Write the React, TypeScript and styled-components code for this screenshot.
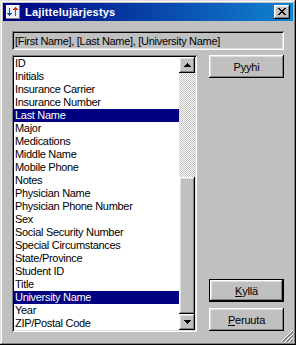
import React from "react";
import styled, { createGlobalStyle, css } from "styled-components";

const Global = createGlobalStyle`
  html, body { margin: 0; padding: 0; background: #c0c0c0; }
  #root { width: 296px; height: 345px; }
`;

const raised = css`
  box-shadow: inset -1px -1px 0 #000, inset 1px 1px 0 #fff,
    inset -2px -2px 0 #808080, inset 2px 2px 0 #dfdfdf;
`;

const sunken = css`
  box-shadow: inset 1px 1px 0 #808080, inset -1px -1px 0 #fff,
    inset 2px 2px 0 #000, inset -2px -2px 0 #dfdfdf;
`;

const Window = styled.div`
  position: relative;
  box-sizing: border-box;
  width: 296px;
  height: 345px;
  padding: 3px;
  background: #c0c0c0;
  box-shadow: inset -1px -1px 0 #000, inset 1px 1px 0 #dfdfdf,
    inset -2px -2px 0 #808080, inset 2px 2px 0 #fff;
  display: flex;
  flex-direction: column;
  font-family: "Liberation Sans", Arial, sans-serif;
  font-size: 11px;
  color: #000;
`;

const TitleBar = styled.div`
  height: 18px;
  flex: none;
  display: flex;
  align-items: center;
  padding: 0 3px 0 2px;
  background: linear-gradient(to right, #000080, #1084d0);
  color: #fff;
`;

const TitleText = styled.span`
  flex: 1;
  margin-left: 4px;
  font-weight: bold;
  font-size: 11px;
  letter-spacing: 0.2px;
  line-height: 18px;
  white-space: nowrap;
`;

const CloseButton = styled.div`
  width: 16px;
  height: 14px;
  box-sizing: border-box;
  background: #c0c0c0;
  ${raised};
  display: flex;
  align-items: center;
  justify-content: center;
  padding: 0 0 1px 0;
`;

const Body = styled.div`
  flex: 1;
  display: flex;
  flex-direction: column;
  gap: 5px;
  padding: 10px 9px 10px 9px;
`;

const Field = styled.div`
  height: 19px;
  flex: none;
  box-sizing: border-box;
  ${sunken};
  padding: 1px 3px 0 3px;
  line-height: 18px;
  letter-spacing: -0.3px;
  white-space: nowrap;
  overflow: hidden;
`;

const Row = styled.div`
  flex: 1;
  display: flex;
  gap: 12px;
  min-height: 0;
`;

const ListBox = styled.div`
  width: 185px;
  box-sizing: border-box;
  padding: 2px;
  background: #fff;
  ${sunken};
  display: flex;
`;

const Items = styled.div`
  flex: 1;
  display: flex;
  flex-direction: column;
  overflow: hidden;
`;

const Item = styled.div<{ $selected?: boolean }>`
  height: 13px;
  line-height: 13px;
  padding-left: 1px;
  white-space: nowrap;
  letter-spacing: -0.3px;
  background: ${(p) => (p.$selected ? "#000080" : "transparent")};
  color: ${(p) => (p.$selected ? "#fff" : "#000")};
`;

const ScrollBar = styled.div`
  width: 16px;
  flex: none;
  display: flex;
  flex-direction: column;
`;

const ArrowButton = styled.div`
  width: 16px;
  height: 16px;
  flex: none;
  box-sizing: border-box;
  background: #c0c0c0;
  ${raised};
  display: flex;
  align-items: center;
  justify-content: center;
`;

const Track = styled.div`
  flex: 1;
  display: flex;
  flex-direction: column;
  justify-content: flex-end;
  background-color: #c0c0c0;
  background-image: conic-gradient(#fff 25%, #c0c0c0 0 50%, #fff 0 75%, #c0c0c0 0);
  background-size: 2px 2px;
`;

const Thumb = styled.div`
  width: 16px;
  box-sizing: border-box;
  background: #c0c0c0;
  ${raised};
`;

const ButtonColumn = styled.div`
  width: 75px;
  display: flex;
  flex-direction: column;
  gap: 6px;
  padding-bottom: 1px;
`;

const Button = styled.div<{ $default?: boolean; $push?: boolean }>`
  height: 23px;
  flex: none;
  box-sizing: border-box;
  background: #c0c0c0;
  display: flex;
  align-items: center;
  justify-content: center;
  letter-spacing: -0.2px;
  margin-top: ${(p) => (p.$push ? "auto" : "0")};
  border: ${(p) => (p.$default ? "1px solid #000" : "none")};
  ${raised};
`;

const Grip = styled.svg`
  position: absolute;
  right: 3px;
  bottom: 3px;
`;

const Pixels: React.FC<{ cells: string[]; color: string }> = ({ cells, color }) => (
  <>
    {cells.flatMap((row, y) =>
      row.split("").map((c, x) =>
        c === "x" ? <rect key={`${x}-${y}`} x={x} y={y} width={1} height={1} fill={color} /> : null
      )
    )}
  </>
);

const CloseGlyph = () => (
  <svg width="8" height="7" viewBox="0 0 8 7" shapeRendering="crispEdges">
    <Pixels
      color="#000"
      cells={["xx....xx", ".xx..xx.", "..xxxx..", "...xx...", "..xxxx..", ".xx..xx.", "xx....xx"]}
    />
  </svg>
);

const Arrow: React.FC<{ down?: boolean }> = ({ down }) => {
  const rows = ["...x...", "..xxx..", ".xxxxx.", "xxxxxxx"];
  return (
    <svg width="7" height="4" viewBox="0 0 7 4" shapeRendering="crispEdges">
      <Pixels color="#000" cells={down ? [...rows].reverse() : rows} />
    </svg>
  );
};

const AppIcon = () => (
  <svg width="16" height="16" viewBox="0 0 16 16" shapeRendering="crispEdges">
    <rect x="1" y="1" width="14" height="14" fill="#fff" />
    <rect x="1" y="1" width="14" height="1" fill="#fff" />
    <rect x="1" y="14" width="14" height="1" fill="#808080" />
    <rect x="14" y="1" width="1" height="14" fill="#808080" />
    <rect x="2" y="2" width="12" height="12" fill="#e8eef8" />
    <Pixels
      color="#2040c0"
      cells={[
        "",
        "",
        "",
        "",
        "....x",
        "....x",
        "....x",
        "....x",
        "....x",
        "..xxxxx",
        "...xxx",
        "....x",
      ]}
    />
    <Pixels
      color="#e02000"
      cells={[
        "",
        "",
        "",
        "..........x",
        ".........xxx",
        "........xxxxx",
        "..........x",
        "..........x",
        "..........x",
        "..........x",
        "..........x",
        "..........x",
      ]}
    />
  </svg>
);

const GripIcon = () => {
  const rects: React.ReactNode[] = [];
  const size = 12;
  const groups = [
    { c: 11, color: "#fff" },
    { c: 12, color: "#808080" },
    { c: 13, color: "#808080" },
    { c: 15, color: "#fff" },
    { c: 16, color: "#808080" },
    { c: 17, color: "#808080" },
    { c: 19, color: "#fff" },
    { c: 20, color: "#808080" },
    { c: 21, color: "#808080" },
  ];
  groups.forEach(({ c, color }) => {
    for (let x = 0; x < size; x++) {
      const y = c - x;
      if (y >= 0 && y < size) rects.push(<rect key={`${c}-${x}`} x={x} y={y} width={1} height={1} fill={color} />);
    }
  });
  return <>{rects}</>;
};

const ITEMS = [
  "ID",
  "Initials",
  "Insurance Carrier",
  "Insurance Number",
  "Last Name",
  "Major",
  "Medications",
  "Middle Name",
  "Mobile Phone",
  "Notes",
  "Physician Name",
  "Physician Phone Number",
  "Sex",
  "Social Security Number",
  "Special Circumstances",
  "State/Province",
  "Student ID",
  "Title",
  "University Name",
  "Year",
  "ZIP/Postal Code",
];

const SELECTED = new Set(["Last Name", "University Name"]);
const TOTAL_ITEMS = 37;
const TRACK = 241;

export default function App() {
  const thumb = Math.round((TRACK * ITEMS.length) / TOTAL_ITEMS);
  return (
    <>
      <Global />
      <Window>
        <TitleBar>
          <AppIcon />
          <TitleText>Lajittelujärjestys</TitleText>
          <CloseButton>
            <CloseGlyph />
          </CloseButton>
        </TitleBar>
        <Body>
          <Field>[First Name], [Last Name], [University Name]</Field>
          <Row>
            <ListBox>
              <Items>
                {ITEMS.map((it) => (
                  <Item key={it} $selected={SELECTED.has(it)}>
                    {it}
                  </Item>
                ))}
              </Items>
              <ScrollBar>
                <ArrowButton>
                  <Arrow />
                </ArrowButton>
                <Track>
                  <Thumb style={{ height: thumb }} />
                </Track>
                <ArrowButton>
                  <Arrow down />
                </ArrowButton>
              </ScrollBar>
            </ListBox>
            <ButtonColumn>
              <Button>
                P<u>y</u>yhi
              </Button>
              <Button $default $push>
                <u>K</u>yllä
              </Button>
              <Button>
                <u>P</u>eruuta
              </Button>
            </ButtonColumn>
          </Row>
        </Body>
        <Grip width="12" height="12" viewBox="0 0 12 12" shapeRendering="crispEdges">
          <GripIcon />
        </Grip>
      </Window>
    </>
  );
}
